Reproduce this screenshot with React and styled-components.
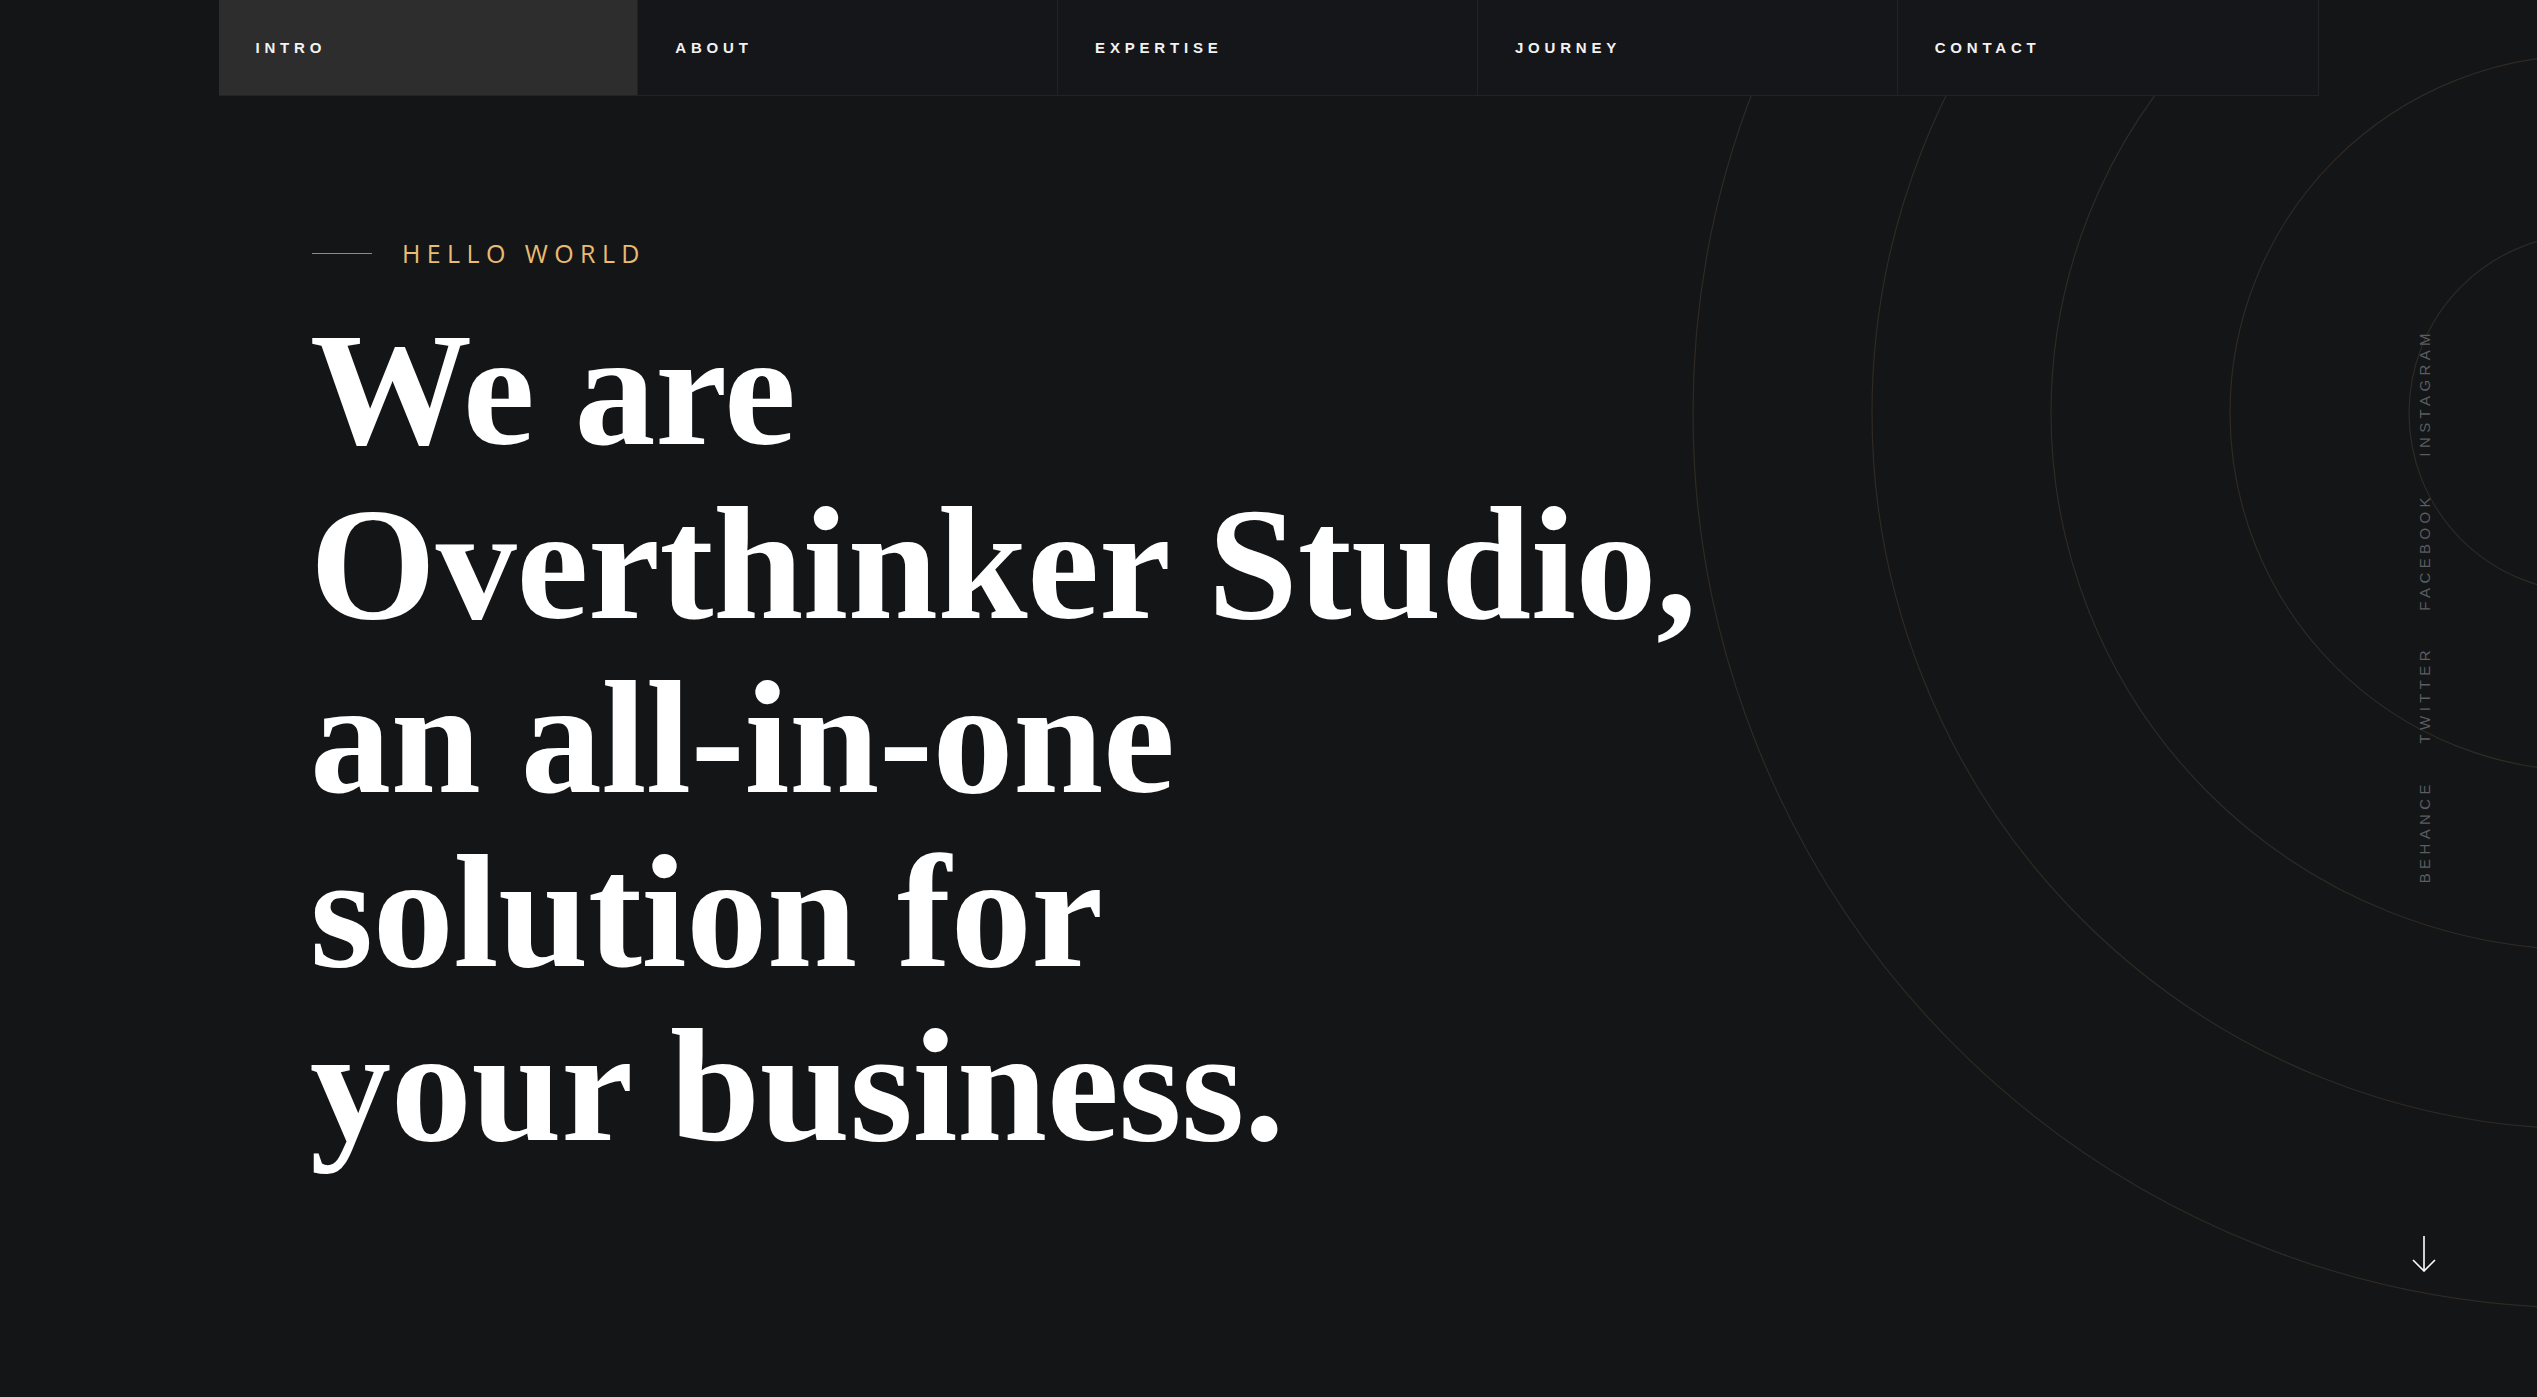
import React from 'react'
import styled, { createGlobalStyle } from 'styled-components'

const GlobalStyle = createGlobalStyle`
  * { box-sizing: border-box; }
  html, body {
    margin: 0;
    padding: 0;
    background: #141517;
  }
  body {
    font-family: "Liberation Sans", Arial, sans-serif;
    -webkit-font-smoothing: antialiased;
  }
`

const Page = styled.div`
  position: relative;
  min-height: 1397px;
  background: #141517;
  overflow: hidden;
  display: flex;
  flex-direction: column;
`

const Rings = styled.svg`
  position: absolute;
  top: 0;
  left: 0;
  pointer-events: none;
  z-index: 0;
`

const Nav = styled.nav`
  position: relative;
  z-index: 2;
  width: 2100px;
  margin: 0 auto;
  height: 96px;
  display: grid;
  grid-template-columns: repeat(5, 1fr);
  background: #151619;
  border-bottom: 1px solid #222326;
  border-right: 1px solid #222326;
`

const Tab = styled.a`
  display: flex;
  align-items: center;
  padding-left: 37px;
  background: ${p => (p.$active ? '#2d2d2d' : 'transparent')};
  border-right: ${p => (p.$last ? 'none' : '1px solid #222326')};
  color: #f2f2f2;
  font-family: "Liberation Sans", Arial, sans-serif;
  font-weight: 700;
  font-size: 15px;
  letter-spacing: 4.8px;
  text-transform: uppercase;
  text-decoration: none;
  cursor: pointer;
`

const Hero = styled.main`
  position: relative;
  z-index: 1;
  flex: 1;
  display: flex;
  justify-content: space-between;
`

const Intro = styled.section`
  padding-left: 310px;
  padding-top: 141px;
`

const Eyebrow = styled.div`
  display: flex;
  align-items: center;
  gap: 30px;
  height: 32px;
  margin-left: 2px;
`

const Rule = styled.span`
  display: block;
  width: 60px;
  height: 1px;
  background: #8a8a8a;
`

const EyebrowText = styled.span`
  font-family: "Open Sans", "Liberation Sans", sans-serif;
  font-size: 25px;
  letter-spacing: 6.4px;
  color: #e9bb73;
  text-transform: uppercase;
`

const Headline = styled.h1`
  margin: 34px 0 0;
  font-family: "Liberation Serif", "Times New Roman", serif;
  font-weight: 700;
  font-size: 162px;
  line-height: 174px;
  letter-spacing: -0.3px;
  color: #ffffff;
`

const Line = styled.span`
  display: block;
  white-space: nowrap;
`

const Rail = styled.aside`
  width: 40px;
  margin-right: 93px;
  padding-top: 233px;
  padding-bottom: 125px;
  display: flex;
  flex-direction: column;
  align-items: center;
`

const Socials = styled.ul`
  list-style: none;
  margin: 0;
  padding: 0;
  display: flex;
  flex-direction: column;
  align-items: center;
  gap: 36px;
`

const Social = styled.li`
  writing-mode: vertical-rl;
  transform: rotate(180deg);
  font-family: "Liberation Sans", Arial, sans-serif;
  font-size: 15px;
  letter-spacing: 4.4px;
  color: #5a5d61;
  text-transform: uppercase;
`

const ScrollDown = styled.div`
  margin-top: auto;
  width: 24px;
  height: 36px;
  color: #ffffff;
`

const tabs = ['Intro', 'About', 'Expertise', 'Journey', 'Contact']
const socials = ['Instagram', 'Facebook', 'Twitter', 'Behance']
const radii = [179, 358, 537, 716, 895]

export default function App() {
  return (
    <>
      <GlobalStyle />
      <Page>
        <Rings width="2537" height="1397" viewBox="0 0 2537 1397">
          {radii.map(r => (
            <circle key={r} cx="2588" cy="413" r={r} fill="none" stroke="rgba(233,187,115,0.13)" strokeWidth="1.2" />
          ))}
        </Rings>

        <Nav>
          {tabs.map((t, i) => (
            <Tab key={t} $active={i === 0} $last={i === tabs.length - 1}>{t}</Tab>
          ))}
        </Nav>

        <Hero>
          <Intro>
            <Eyebrow>
              <Rule />
              <EyebrowText>Hello World</EyebrowText>
            </Eyebrow>
            <Headline>
              <Line>We are</Line>
              <Line>Overthinker Studio,</Line>
              <Line>an all-in-one</Line>
              <Line>solution for</Line>
              <Line>your business.</Line>
            </Headline>
          </Intro>

          <Rail>
            <Socials>
              {socials.map(s => <Social key={s}>{s}</Social>)}
            </Socials>
            <ScrollDown>
              <svg width="24" height="36" viewBox="0 0 24 36" fill="none" stroke="currentColor" strokeWidth="1.6">
                <path d="M12 0 V35" />
                <path d="M1 24 L12 35 L23 24" />
              </svg>
            </ScrollDown>
          </Rail>
        </Hero>
      </Page>
    </>
  )
}
